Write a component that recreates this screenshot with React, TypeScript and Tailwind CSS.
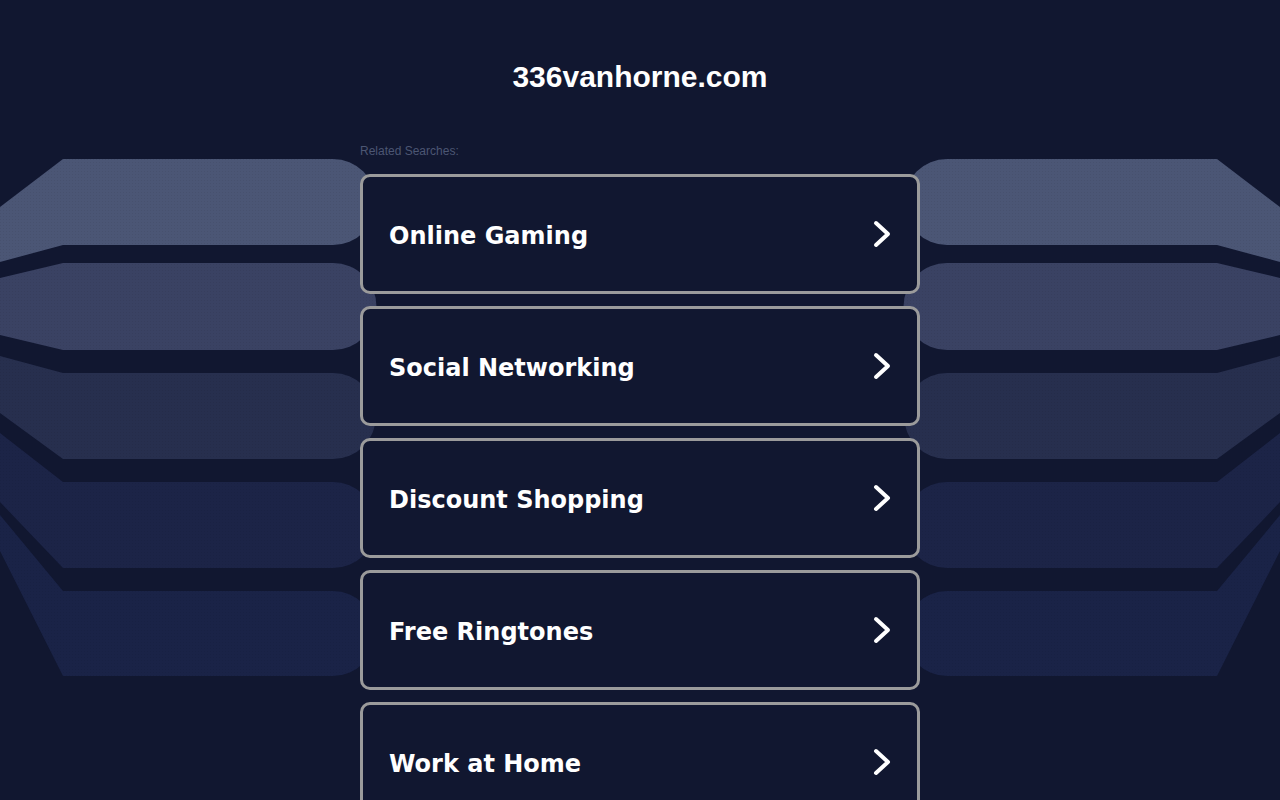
import React from 'react';

const searches = [
  'Online Gaming',
  'Social Networking',
  'Discount Shopping',
  'Free Ringtones',
  'Work at Home',
];

// decorative bands behind the list, drawn for the left side and mirrored on the right
const bands = [
  { d: 'M0,207 L63,159 L333,159 A43,43 0 0 1 333,245 L63,245 L0,262 Z', fill: '#4b5675' },
  { d: 'M0,278 L63,263 L333,263 A43.5,43.5 0 0 1 333,350 L63,350 L0,335 Z', fill: '#3a4263' },
  { d: 'M0,356 L63,373 L333,373 A43,43 0 0 1 333,459 L63,459 L0,413 Z', fill: '#272f4e' },
  { d: 'M0,433 L63,482 L333,482 A43,43 0 0 1 333,568 L63,568 L0,502 Z', fill: '#1c2447' },
  { d: 'M0,515 L63,591 L333,591 A42.5,42.5 0 0 1 333,676 L63,676 L0,551 Z', fill: '#1a2347' },
];

const Bands = ({ id }: { id: string }) => (
  <svg width="380" height="800" viewBox="0 0 380 800" className="block">
    <defs>
      <pattern id={id} width="3" height="3" patternUnits="userSpaceOnUse">
        <rect x="0" y="0" width="1" height="1" fill="#000" opacity="0.06" />
      </pattern>
    </defs>
    {bands.map((b) => (
      <g key={b.d}>
        <path d={b.d} fill={b.fill} />
        <path d={b.d} fill={`url(#${id})`} />
      </g>
    ))}
  </svg>
);

const Chevron = () => (
  <svg width="20" height="30" viewBox="0 0 20 30" fill="none">
    <polyline
      points="4,4 16,15 4,26"
      stroke="#ffffff"
      strokeWidth="4"
      strokeLinecap="round"
      strokeLinejoin="round"
    />
  </svg>
);

export default function App() {
  return (
    <div className="relative min-h-screen w-full overflow-hidden bg-[#111730]">
      {/* side decoration */}
      <div className="absolute left-0 top-0">
        <Bands id="dotsL" />
      </div>
      <div className="absolute right-0 top-0 -scale-x-100">
        <Bands id="dotsR" />
      </div>

      <div className="relative flex flex-col items-center">
        <h1 className="pt-[60px] text-[30px] font-bold leading-[34px] text-white font-['Liberation_Sans',Arial,sans-serif]">
          336vanhorne.com
        </h1>

        <div className="mt-[49px] w-[560px]">
          <p className="text-[12px] leading-4 text-[#4c5673] font-['Liberation_Sans',Arial,sans-serif]">
            Related Searches:
          </p>
          <div className="mt-[15px] flex flex-col gap-3">
            {searches.map((s) => (
              <a
                key={s}
                href="#"
                className="flex h-[120px] items-center justify-between rounded-[10px] border-[3px] border-[#9b9b9b] bg-[#111730] pb-[-2px] pl-[26px] pr-[25px]"
              >
                <span className="pt-[3px] text-[24px] font-bold text-white font-['DejaVu_Sans',Verdana,sans-serif]">
                  {s}
                </span>
                <Chevron />
              </a>
            ))}
          </div>
        </div>
      </div>
    </div>
  );
}
